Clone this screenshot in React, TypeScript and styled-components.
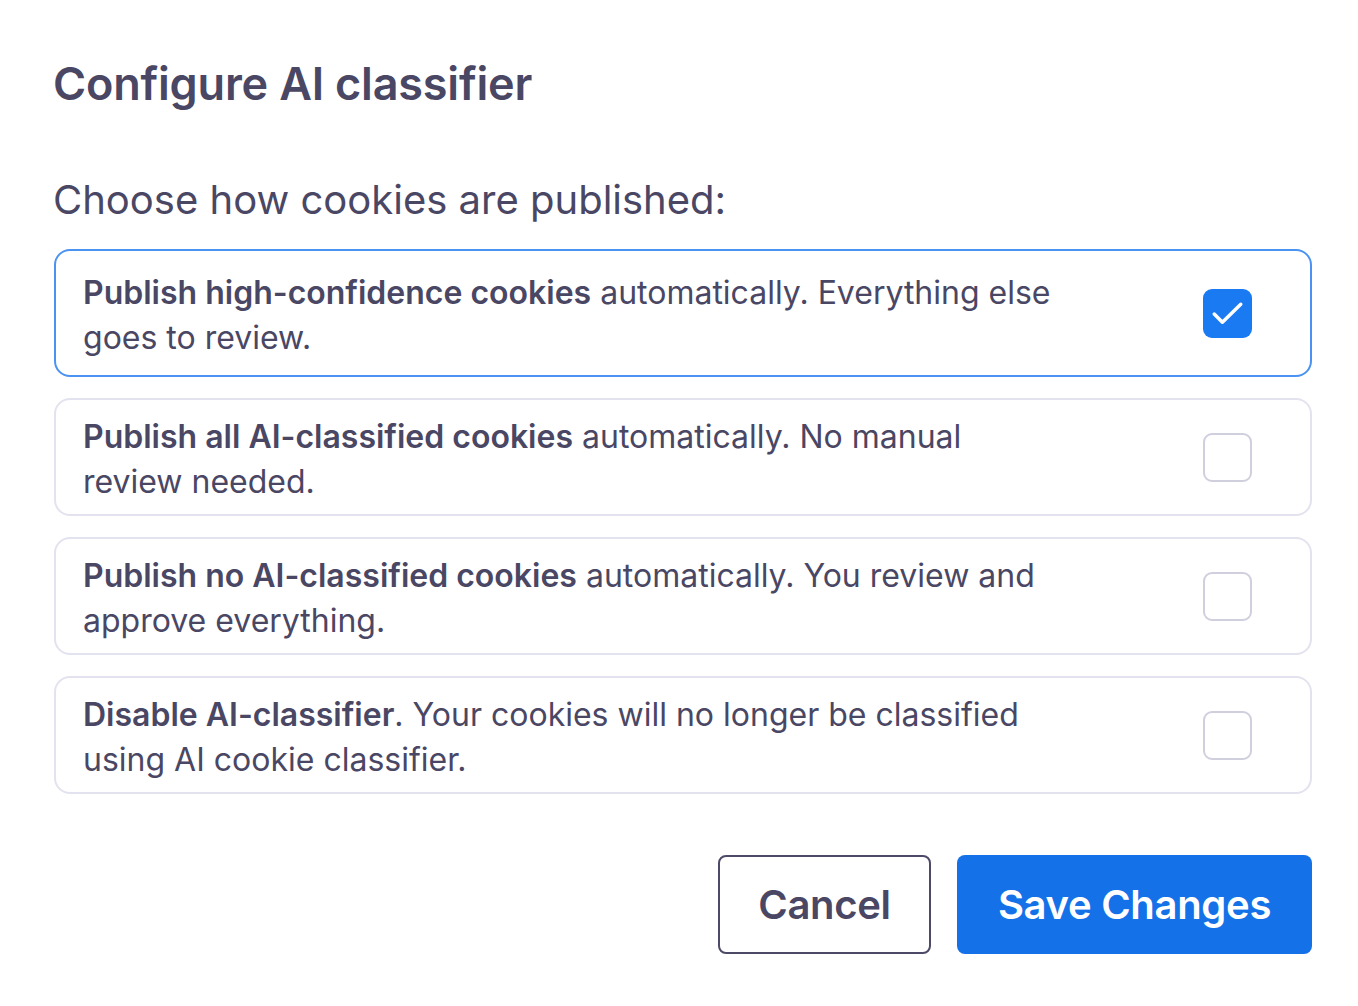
import React, { useState } from "react";
import styled, { createGlobalStyle } from "styled-components";

const Global = createGlobalStyle`
  html, body { margin: 0; padding: 0; background: #ffffff; }
  body { font-family: Inter, "Noto Sans", sans-serif; color: #4a4764; }
`;

const Page = styled.div`
  padding: 56px 46px 52px 54px;
  display: flex;
  flex-direction: column;
`;

const Title = styled.h1`
  margin: 0 0 0 -1px;
  font-size: 45px;
  line-height: 56px;
  font-weight: 600;
  color: #4a4764;
  letter-spacing: -0.2px;
`;

const Subtitle = styled.h2`
  margin: 64px 0 25px -1px;
  font-size: 40px;
  line-height: 48px;
  font-weight: 400;
  color: #4a4764;
`;

const Options = styled.div`
  display: flex;
  flex-direction: column;
  gap: 21px;
`;

const Card = styled.label<{ $active: boolean }>`
  display: flex;
  align-items: center;
  justify-content: space-between;
  min-height: ${(p) => (p.$active ? 128 : 118)}px;
  box-sizing: border-box;
  padding: 0 58px 0 27px;
  border: 2px solid ${(p) => (p.$active ? "#4b93f2" : "#e3e3ef")};
  border-radius: 16px;
  cursor: pointer;
`;

const Text = styled.div`
  max-width: 982px;
  padding-top: 3px;
  font-size: 32px;
  line-height: 45px;
  color: #4a4764;
  strong { font-weight: 600; }
`;

const Box = styled.span<{ $checked: boolean }>`
  flex: none;
  width: 49px;
  height: 49px;
  box-sizing: border-box;
  border-radius: 9px;
  display: flex;
  align-items: center;
  justify-content: center;
  background: ${(p) => (p.$checked ? "#1a7af1" : "#ffffff")};
  border: ${(p) => (p.$checked ? "none" : "2.5px solid #d0cfdd")};
`;

const Actions = styled.div`
  display: flex;
  justify-content: flex-end;
  gap: 26px;
  margin-top: 61px;
`;

const Button = styled.button<{ $primary?: boolean }>`
  height: 99px;
  padding: 0 ${(p) => (p.$primary ? 40 : 38)}px;
  box-sizing: border-box;
  border-radius: 8px;
  font-family: Inter, "Noto Sans", sans-serif;
  font-size: 40px;
  font-weight: 600;
  letter-spacing: -0.3px;
  cursor: pointer;
  background: ${(p) => (p.$primary ? "#1571e8" : "#ffffff")};
  color: ${(p) => (p.$primary ? "#ffffff" : "#4a4764")};
  border: ${(p) => (p.$primary ? "none" : "2px solid #4d4a68")};
  min-width: ${(p) => (p.$primary ? 355 : 213)}px;
`;

const options = [
  { b: "Publish high-confidence cookies", t: " automatically. Everything else goes to review." },
  { b: "Publish all AI-classified cookies", t: " automatically. No manual review needed." },
  { b: "Publish no AI-classified cookies", t: " automatically. You review and approve everything." },
  { b: "Disable AI-classifier", t: ". Your cookies will no longer be classified using AI cookie classifier." },
];

export default function App() {
  const [sel, setSel] = useState(0);
  return (
    <>
      <Global />
      <Page>
        <Title>Configure AI classifier</Title>
        <Subtitle>Choose how cookies are published:</Subtitle>
        <Options>
          {options.map((o, i) => (
            <Card key={i} $active={sel === i} onClick={() => setSel(i)}>
              <Text>
                <strong>{o.b}</strong>
                {o.t}
              </Text>
              <Box $checked={sel === i}>
                {sel === i && (
                  <svg width="49" height="49" viewBox="0 0 48 48" fill="none">
                    <path d="M11 24.5l8 8L37 15" stroke="#fff" strokeWidth="3.4" strokeLinecap="round" strokeLinejoin="round" />
                  </svg>
                )}
              </Box>
            </Card>
          ))}
        </Options>
        <Actions>
          <Button>Cancel</Button>
          <Button $primary>Save Changes</Button>
        </Actions>
      </Page>
    </>
  );
}
